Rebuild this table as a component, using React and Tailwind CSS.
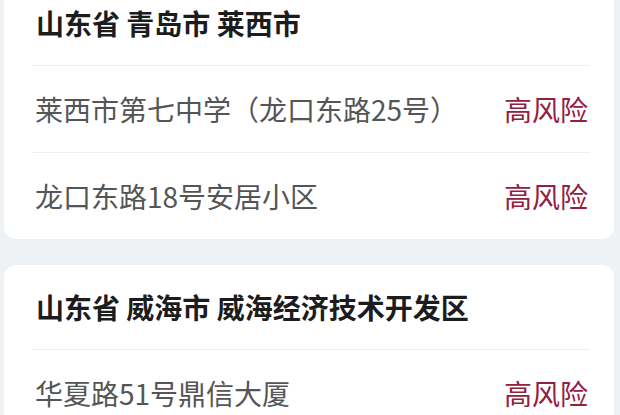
const areas = [
	{
		title: '山东省 青岛市 莱西市',
		places: ['莱西市第七中学（龙口东路25号）', '龙口东路18号安居小区'],
	},
	{
		title: '山东省 威海市 威海经济技术开发区',
		places: ['华夏路51号鼎信大厦', '华夏路与青岛路交汇处'],
	},
];

export default function App() {
	return (
		<main
			className="h-[415px] overflow-hidden bg-[#eef2f4]"
			style={{ fontFamily: '"Noto Sans CJK SC", "Noto Sans", sans-serif' }}
		>
			<div className="-mt-[19px] flex flex-col gap-[26px] pl-[4px] pr-[6px]">
				{areas.map((area) => (
					<section key={area.title} className="rounded-[12px] bg-white pl-[28px] pr-[24px]">
						<h2 className="flex h-[84px] items-center pl-[4px] text-[28px] font-bold text-[#1c1c1c]">
							{area.title}
						</h2>
						{area.places.map((place) => (
							<div
								key={place}
								className="flex h-[87px] items-center justify-between border-t border-[#efefef] pl-[3px] pr-[2px] text-[28px]"
							>
								<span className="text-[#555555]">{place}</span>
								<span className="text-[#93203e]">高风险</span>
							</div>
						))}
					</section>
				))}
			</div>
		</main>
	);
}
